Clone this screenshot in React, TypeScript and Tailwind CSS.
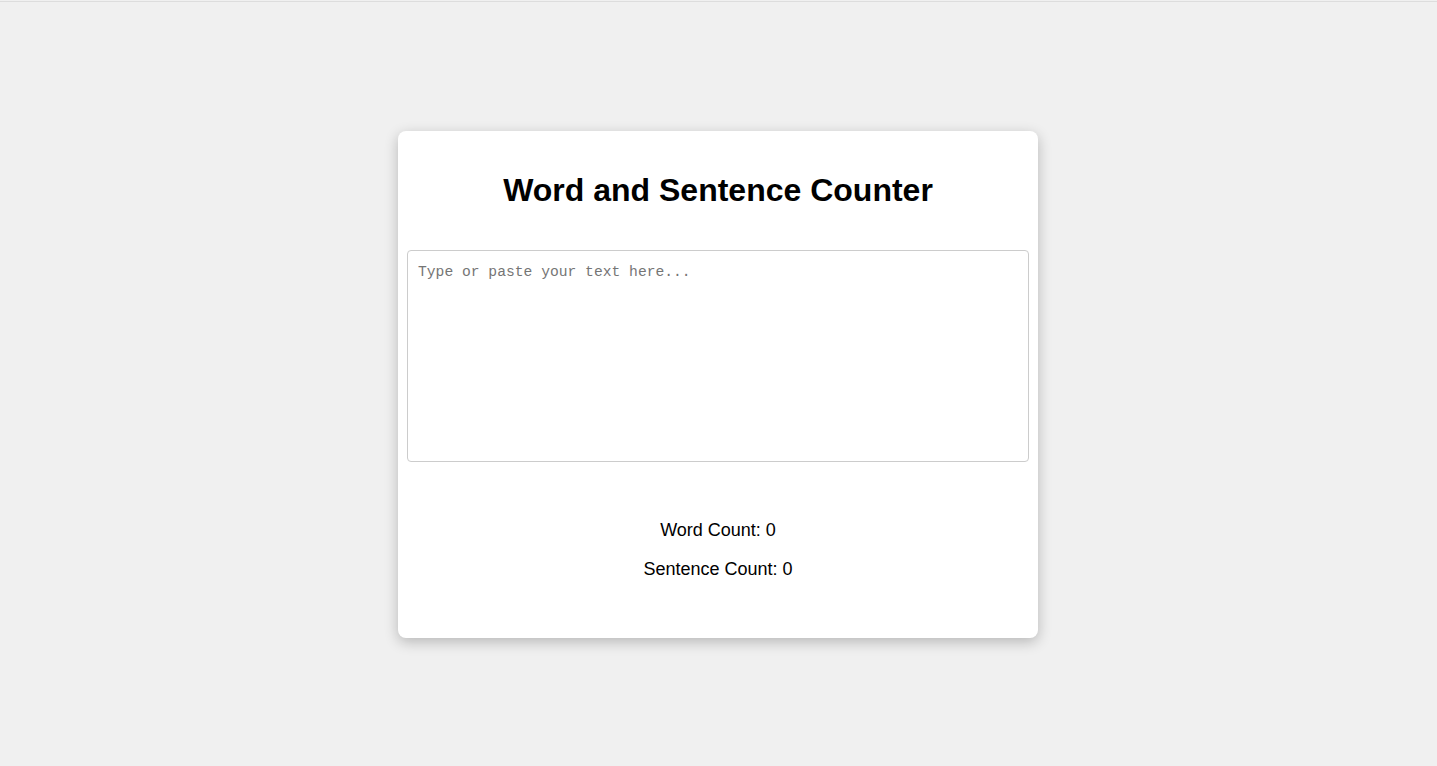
// App.tsx

import React, { useState } from "react";

const countWords = (text: string) => {
  const trimmed = text.trim();
  return trimmed ? trimmed.split(/\s+/).length : 0;
};

const countSentences = (text: string) => {
  const parts = text.split(/[.!?]+/).filter((s) => s.trim().length > 0);
  return parts.length;
};

const App: React.FC = () => {
  const [text, setText] = useState("");

  return (
    <div
      className="bg-[#f0f0f0] min-h-screen flex flex-col"
      style={{ fontFamily: '"Liberation Sans", Arial, sans-serif' }}
    >
      {/* thin line along the top edge */}
      <div className="h-px mt-px bg-[#dddddd]" />

      <main className="flex-1 flex items-center justify-center pr-px">
        <div className="w-[640px] bg-white rounded-lg shadow-[0_4px_14px_rgba(0,0,0,0.24)] px-[9px] pt-[41px] pb-[58px] flex flex-col items-center">
          <h1 className="text-[32px] leading-[37px] font-bold text-black text-center">
            Word and Sentence Counter
          </h1>

          <textarea
            value={text}
            onChange={(e) => setText(e.target.value)}
            placeholder="Type or paste your text here..."
            className="mt-[41px] w-full h-[212px] border border-[#cccccc] rounded-[4px] px-[10px] pt-[12px] pb-[10px] text-[14.67px] leading-[19px] text-black placeholder:text-[#757575] resize-none focus:outline-none"
            style={{ fontFamily: '"Liberation Mono", "Courier New", monospace' }}
          />

          <div className="mt-[58px] flex flex-col items-center gap-[18px] text-[18px] leading-[21px] text-black">
            <p>Word Count: {countWords(text)}</p>
            <p>Sentence Count: {countSentences(text)}</p>
          </div>
        </div>
      </main>
    </div>
  );
};

export default App;
